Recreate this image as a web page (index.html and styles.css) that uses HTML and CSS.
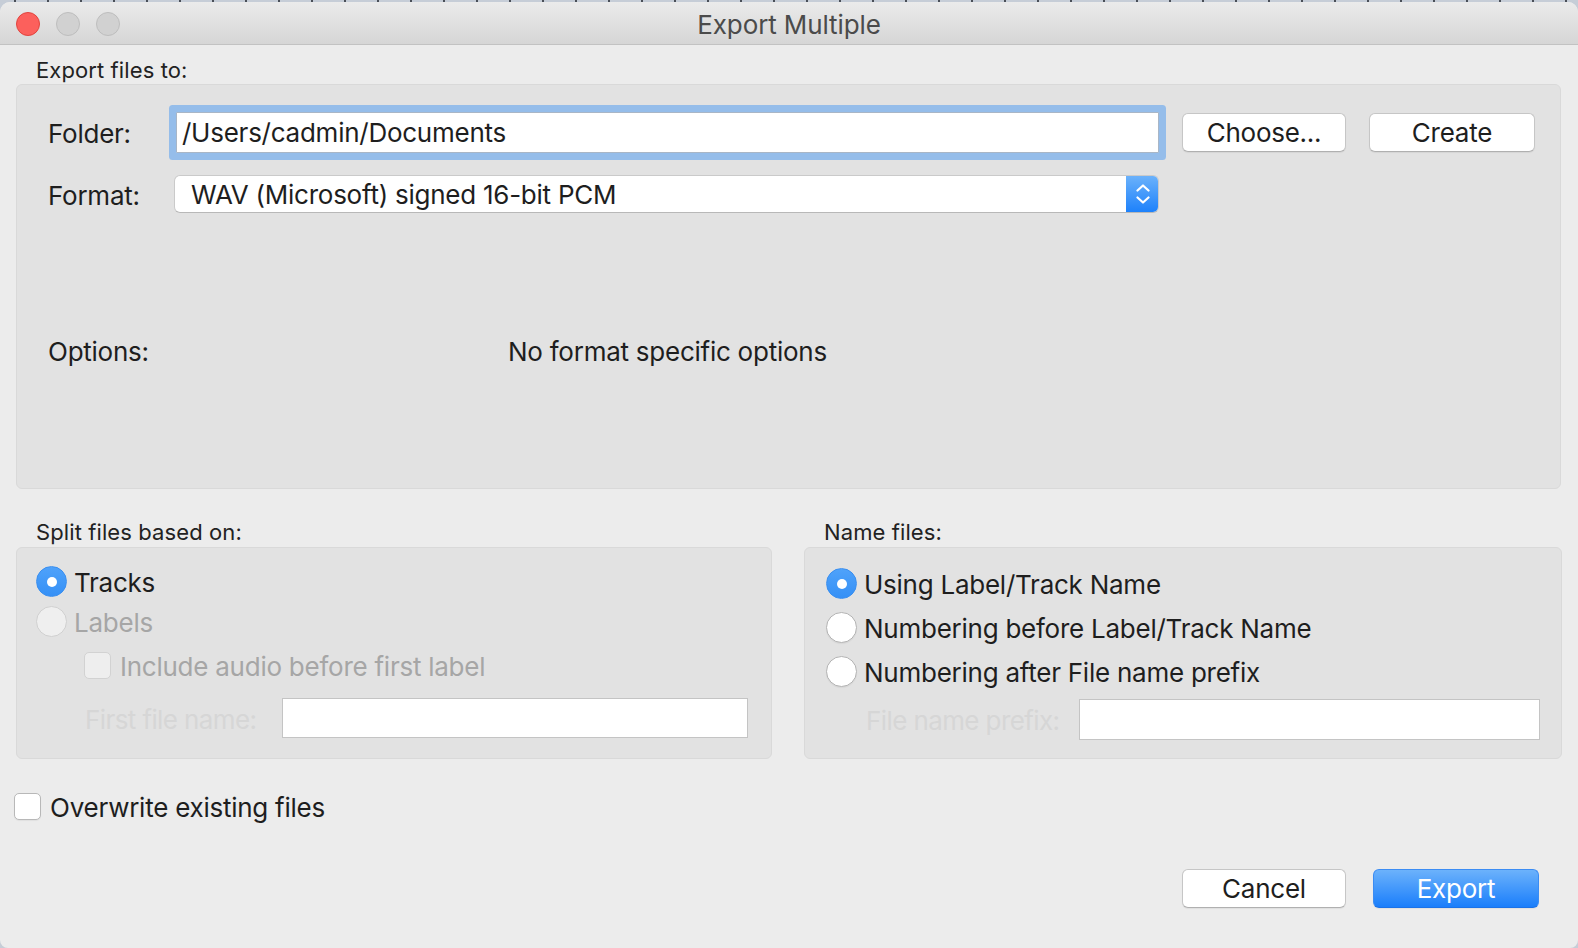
FILE: index.html
```html
<!DOCTYPE html>
<html lang="en">
<head>
<meta charset="utf-8">
<title>Export Multiple</title>
<link rel="stylesheet" href="styles.css">
</head>
<body>
<div class="desk"></div>
<div class="window">
  <div class="titlebar">
    <div class="lights">
      <span class="light close"></span>
      <span class="light"></span>
      <span class="light"></span>
    </div>
    <div class="title">Export Multiple</div>
  </div>
  <div class="content">
    <div class="caption">Export files to:</div>
    <div class="group top-group">
      <div class="field-row row-folder">
        <div class="lbl lbl-folder">Folder:</div>
        <div class="textbox focused">/Users/cadmin/Documents</div>
        <div class="btn btn-choose">Choose...</div>
        <div class="btn btn-create">Create</div>
      </div>
      <div class="field-row row-format">
        <div class="lbl lbl-format">Format:</div>
        <div class="popup">
          <span class="popup-text">WAV (Microsoft) signed 16-bit PCM</span>
          <span class="stepper">
            <svg width="14" height="22" viewBox="0 0 14 22"><path d="M1.5 7.5 L7 2.5 L12.5 7.5" fill="none" stroke="#fff" stroke-width="2.2" stroke-linecap="round" stroke-linejoin="round"/><path d="M1.5 14.5 L7 19.5 L12.5 14.5" fill="none" stroke="#fff" stroke-width="2.2" stroke-linecap="round" stroke-linejoin="round"/></svg>
          </span>
        </div>
      </div>
      <div class="field-row row-options">
        <div class="lbl lbl-options">Options:</div>
        <div class="options-text">No format specific options</div>
      </div>
    </div>
    <div class="bottom-groups">
      <div class="col">
        <div class="caption caption-split">Split files based on:</div>
        <div class="group split-group">
          <div class="choice row-tracks"><span class="radio on"></span><span class="choice-text">Tracks</span></div>
          <div class="choice row-labels disabled"><span class="radio off-dis"></span><span class="choice-text">Labels</span></div>
          <div class="choice row-include disabled"><span class="checkbox dis"></span><span class="choice-text">Include audio before first label</span></div>
          <div class="field-row row-first">
            <div class="faint-lbl lbl-first">First file name:</div>
            <div class="plainbox first-box"></div>
          </div>
        </div>
      </div>
      <div class="col">
        <div class="caption caption-name">Name files:</div>
        <div class="group name-group">
          <div class="choice row-n1"><span class="radio on"></span><span class="choice-text">Using Label/Track Name</span></div>
          <div class="choice row-n2"><span class="radio off"></span><span class="choice-text">Numbering before Label/Track Name</span></div>
          <div class="choice row-n3"><span class="radio off"></span><span class="choice-text">Numbering after File name prefix</span></div>
          <div class="field-row row-prefix">
            <div class="faint-lbl lbl-prefix">File name prefix:</div>
            <div class="plainbox prefix-box"></div>
          </div>
        </div>
      </div>
    </div>
    <div class="choice overwrite"><span class="checkbox"></span><span class="choice-text">Overwrite existing files</span></div>
    <div class="actions">
      <div class="btn btn-cancel">Cancel</div>
      <div class="btn btn-default">Export</div>
    </div>
  </div>
</div>
</body>
</html>
```

FILE: styles.css
```css
* { box-sizing: border-box; }
html, body { margin: 0; padding: 0; }
body {
  width: 1578px;
  height: 948px;
  overflow: hidden;
  background: #c6cdd7;
  font-family: Inter, "Noto Sans", "Liberation Sans", sans-serif;
  color: #1e1e1e;
  white-space: nowrap;
}
.desk {
  height: 2px;
  background: repeating-linear-gradient(90deg, #c6cdd7 0 14px, #4a4f58 14px 16px, #c6cdd7 16px 33px);
}
.window {
  height: 946px;
  background: #ececec;
  border-radius: 10px 10px 8px 8px;
  overflow: hidden;
  display: flex;
  flex-direction: column;
}
.titlebar {
  position: relative;
  height: 43px;
  flex: none;
  background: linear-gradient(#ebebeb, #d6d6d6);
  border-bottom: 1px solid #c2c2c2;
  display: flex;
  align-items: center;
  justify-content: center;
}
.lights {
  position: absolute;
  left: 16px;
  top: 10px;
  display: flex;
  gap: 16px;
}
.light {
  width: 24px;
  height: 24px;
  border-radius: 50%;
  background: #d1d1d1;
  border: 1px solid #bdbdbd;
}
.light.close {
  background: #fc605c;
  border-color: #e0443e;
}
.title {
  font-size: 26px;
  color: #4b4b4b;
  letter-spacing: -0.1px;
  padding-top: 3px;
}
.content {
  flex: 1;
  padding: 12px 17px 0 16px;
  display: flex;
  flex-direction: column;
}
.caption {
  font-size: 22px;
  line-height: 26px;
  height: 26px;
  padding-left: 20px;
  margin-bottom: 1px;
  color: #222;
  letter-spacing: 0.1px;
}
.group {
  background: #e2e2e2;
  border: 1px solid #d9d9d9;
  border-radius: 6px;
}
.top-group {
  height: 405px;
  padding: 27px 0 0 31px;
}
.field-row {
  display: flex;
  align-items: center;
}
.lbl, .textbox, .btn, .popup-text, .options-text, .choice-text {
  letter-spacing: -0.25px;
}
.lbl {
  font-size: 26px;
  flex: none;
  padding-top: 2px;
}
.row-folder { height: 41px; }
.lbl-folder { width: 128px; }
.textbox {
  width: 983px;
  height: 41px;
  background: #fff;
  border: 1px solid #a9b6c6;
  font-size: 26px;
  line-height: 40px;
  padding-left: 5px;
  border-radius: 1px;
  box-shadow: 0 0 0 7px #95bdea;
}
.btn {
  height: 39px;
  background: #fff;
  border: 1px solid #c6c6c6;
  border-bottom-color: #b0b0b0;
  border-radius: 6px;
  font-size: 26px;
  line-height: 37px;
  text-align: center;
  color: #1e1e1e;
  box-shadow: 0 1px 1px rgba(0,0,0,0.06);
}
.btn-choose { width: 164px; margin-left: 23px; }
.btn-create { width: 166px; margin-left: 23px; }
.row-format { margin-top: 22px; height: 38px; }
.lbl-format { width: 126px; }
.popup {
  width: 985px;
  height: 38px;
  background: #fff;
  border: 1px solid #cacaca;
  border-bottom-color: #b8b8b8;
  border-radius: 6px;
  display: flex;
  align-items: center;
  overflow: hidden;
}
.popup-text {
  flex: 1;
  font-size: 26px;
  padding-left: 16px;
}
.stepper {
  width: 33px;
  height: 38px;
  margin: -1px -1px -1px 0;
  background: linear-gradient(#6db3fb, #1b80fb);
  display: flex;
  align-items: center;
  justify-content: center;
}
.row-options { margin-top: 117px; height: 40px; }
.lbl-options { width: 460px; }
.options-text { font-size: 26px; padding-top: 2px; }
.bottom-groups {
  margin-top: 30px;
  display: grid;
  grid-template-columns: 756px 758px;
  column-gap: 32px;
}
.caption-split { padding-left: 20px; margin-bottom: 2px; }
.caption-name { padding-left: 20px; margin-bottom: 2px; }
.split-group, .name-group {
  height: 212px;
  padding-left: 19px;
}
.split-group { padding-top: 18px; }
.name-group { padding-top: 20px; padding-left: 21px; }
.choice {
  display: flex;
  align-items: center;
  height: 31px;
}
.choice-text {
  font-size: 26px;
  margin-left: 7px;
  padding-top: 2px;
}
.disabled .choice-text { color: #a6a6a6; }
.radio {
  width: 31px;
  height: 31px;
  border-radius: 50%;
  flex: none;
  position: relative;
}
.radio.on {
  background: linear-gradient(#4fa2fa, #3590f6);
  border: 1px solid #3a8ff0;
}
.radio.on::after {
  content: "";
  position: absolute;
  left: 9.5px;
  top: 9.5px;
  width: 10px;
  height: 10px;
  border-radius: 50%;
  background: #fff;
}
.radio.off {
  background: #fff;
  border: 1px solid #b3b3b3;
  box-shadow: 0 1px 1px rgba(0,0,0,0.05);
}
.radio.off-dis {
  background: #efefef;
  border: 1px solid #d0d0d0;
}
.checkbox {
  width: 27px;
  height: 27px;
  border-radius: 5px;
  flex: none;
  background: #fff;
  border: 1px solid #b8b8b8;
  box-shadow: 0 1px 1px rgba(0,0,0,0.05);
}
.checkbox.dis {
  background: #eeeeee;
  border-color: #d2d2d2;
  box-shadow: none;
}
.row-labels { margin-top: 9px; }
.row-include { margin-top: 15px; height: 27px; padding-left: 48px; }
.row-include .choice-text { margin-left: 9px; }
.row-first { margin-top: 19px; height: 40px; padding-left: 49px; }
.faint-lbl {
  font-size: 26px;
  color: #d6d6d6;
  flex: none;
  padding-top: 2px;
  letter-spacing: -0.6px;
}
.lbl-first { width: 197px; }
.plainbox {
  height: 40px;
  background: #fff;
  border: 1px solid #c4c4c4;
}
.first-box { width: 466px; }
.row-n2, .row-n3 { margin-top: 13px; }
.row-prefix { margin-top: 12px; height: 41px; padding-left: 40px; }
.lbl-prefix { width: 213px; }
.prefix-box { width: 461px; height: 41px; }
.overwrite {
  margin-top: 34px;
  height: 27px;
  margin-left: -2px;
}
.overwrite .choice-text { margin-left: 9px; }
.actions {
  margin-top: 49px;
  display: flex;
  justify-content: flex-end;
  padding-right: 22px;
  gap: 27px;
}
.btn-cancel { width: 164px; }
.btn-default {
  width: 166px;
  background: linear-gradient(#6cb2fb, #1a7efb);
  border: 1px solid #3b8cf3;
  border-bottom-color: #1a72e8;
  color: #fff;
}
```
